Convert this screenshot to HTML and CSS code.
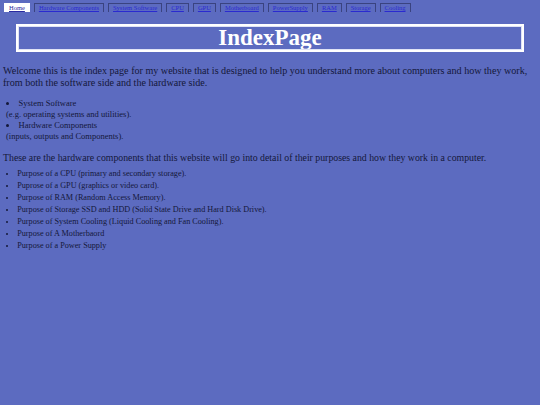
FILE: index.html
```html
<!DOCTYPE html>
<html>
<head>
<meta charset="utf-8">
<link rel="stylesheet" href="styles.css">
</head>
<body>
<nav class="nav">
  <a class="nav-item active" href="#">Home</a>
  <a class="nav-item" href="#">Hardware Components</a>
  <a class="nav-item" href="#">System Software</a>
  <a class="nav-item" href="#">CPU</a>
  <a class="nav-item" href="#">GPU</a>
  <a class="nav-item" href="#">Motherboard</a>
  <a class="nav-item" href="#">PowerSupply</a>
  <a class="nav-item" href="#">RAM</a>
  <a class="nav-item" href="#">Storage</a>
  <a class="nav-item" href="#">Cooling</a>
</nav>
<header class="title-box"><h1 class="title">IndexPage</h1></header>
<p class="intro">Welcome this is the index page for my website that is designed to help you understand more about computers and how they work, from both the software side and the hardware side.</p>
<ul class="topics">
  <li>System Software<br>(e.g. operating systems and utilities).</li>
  <li>Hardware Components<br>(inputs, outputs and Components).</li>
</ul>
<p class="intro second">These are the hardware components that this website will go into detail of their purposes and how they work in a computer.</p>
<ul class="parts">
  <li>Purpose of a CPU (primary and secondary storage).</li>
  <li>Puprose of a GPU (graphics or video card).</li>
  <li>Purpose of RAM (Random Access Memory).</li>
  <li>Purpose of Storage SSD and HDD (Solid State Drive and Hard Disk Drive).</li>
  <li>Purpose of System Cooling (Liquid Cooling and Fan Cooling).</li>
  <li>Purpose of A Motherbaord</li>
  <li>Purpose of a Power Supply</li>
</ul>
</body>
</html>
```
FILE: styles.css
```css
html, body {
  background: #5c6bc0;
}
body {
  margin: 0;
  padding: 3px 2px 3px 3px;
  font-family: "Liberation Serif", "Times New Roman", serif;
  color: #14183a;
}
.nav {
  display: flex;
  gap: 4px;
  margin-left: 1px;
  height: 9px;
}
.nav-item {
  display: block;
  font-size: 6.5px;
  line-height: 7px;
  padding: 0 4px;
  color: #2a2ad0;
  border: 1px solid #3a4380;
  border-bottom: none;
}
.nav-item.active {
  background: #ffffff;
  color: #2a2aa0;
  border-color: #ffffff;
}
.title-box {
  margin: 12px 14px 0 13px;
  border: 2px solid #ffffff;
  outline: 1px solid #dfe3f5;
  outline-offset: -3px;
  height: 24px;
  display: flex;
  align-items: center;
  justify-content: center;
}
.title {
  margin: 0;
  font-size: 23px;
  line-height: 24px;
  font-weight: bold;
  color: #ffffff;
}
.intro {
  font-size: 10.1px;
  line-height: 12px;
  margin: 13px 0 0 0;
}
.intro.second {
  font-size: 9.8px;
  margin-top: 11px;
}
.topics, .parts {
  list-style: disc inside;
  padding: 0;
  margin: 9px 0 0 3px;
  font-size: 8.5px;
  line-height: 10.5px;
}
.topics li { margin-bottom: 1px; }
.parts { margin-top: 4px; font-size: 8.2px; line-height: 12px; }
```
